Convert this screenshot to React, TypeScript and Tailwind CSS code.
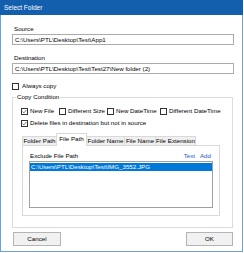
import React from 'react';

const Check = ({ checked }: { checked?: boolean }) => (
    <span className="w-[7px] h-[7px] border border-[#333] bg-white flex items-center justify-center shrink-0">
        {checked && (
            <svg viewBox="0 0 8 8" className="w-[5px] h-[5px]">
                <path d="M1 4.2 L3 6.2 L7 1.6" stroke="#333" strokeWidth="1.1" fill="none" />
            </svg>
        )}
    </span>
);

const tabs = [
    { name: 'Folder Path', w: 'w-[35px]' },
    { name: 'File Path', w: 'w-[31px]', active: true },
    { name: 'Folder Name', w: 'w-[39px]' },
    { name: 'File Name', w: 'w-[32px]' },
    { name: 'File Extension', w: 'w-[41px]' },
];

const App = () => {
    return (
        <div className="w-[244px] h-[253px] bg-white font-['Liberation_Sans',Arial,sans-serif] text-[6.2px] leading-[8px] text-black whitespace-nowrap">
            <div className="w-[243px]">
                {/* Title bar */}
                <div className="h-[15px] bg-[#135fae] text-white flex items-center pl-[4px] text-[6.5px]">
                    Select Folder
                </div>

                <div className="h-[237px] border-x border-b border-[#6fa3d8] flex flex-col pl-[11px]">
                    <div className="mt-[10px] pl-[2px]">Source</div>
                    <div className="mt-[1px] h-[11px] w-[222px] border border-[#ababab] flex items-center pl-[2px]">
                        C:\Users\PTL\Desktop\Test\App1
                    </div>

                    <div className="mt-[9px] pl-[2px]">Destination</div>
                    <div className="mt-[1px] h-[11px] w-[222px] border border-[#ababab] flex items-center pl-[2px]">
                        C:\Users\PTL\Desktop\Test\Test27\New folder (2)
                    </div>

                    <div className="mt-[8px] h-[8px] flex items-center gap-[3px]">
                        <Check />
                        <span>Always copy</span>
                    </div>

                    {/* Copy Condition group */}
                    <div className="relative mt-[7px] w-[221px] h-[131px] border border-[#dcdcdc] pl-[8px]">
                        <span className="absolute -top-[5px] left-[3px] bg-white px-[1px]">Copy Condition</span>

                        <div className="mt-[9px] h-[8px] flex items-center">
                            <div className="w-[38px] flex items-center gap-[2px]">
                                <Check checked />
                                <span>New File</span>
                            </div>
                            <div className="w-[48px] flex items-center gap-[2px]">
                                <Check />
                                <span>Different Size</span>
                            </div>
                            <div className="w-[53px] flex items-center gap-[2px]">
                                <Check />
                                <span>New DateTime</span>
                            </div>
                            <div className="flex items-center gap-[2px]">
                                <Check />
                                <span>Different DateTime</span>
                            </div>
                        </div>

                        <div className="mt-[4px] h-[8px] flex items-center gap-[2px]">
                            <Check checked />
                            <span>Delete files in destination but not in source</span>
                        </div>

                        {/* Tabs */}
                        <div className="mt-[6px] ml-[1px] h-[12px] flex items-end">
                            {tabs.map((t, i) =>
                                t.active ? (
                                    <div
                                        key={t.name}
                                        className={`${t.w} ${i > 0 ? '-ml-px' : ''} relative z-10 -mb-px h-[13px] bg-white border-x border-t border-[#d9d9d9] flex items-center justify-center pb-[2px]`}
                                    >
                                        {t.name}
                                    </div>
                                ) : (
                                    <div
                                        key={t.name}
                                        className={`${t.w} ${i > 0 ? '-ml-px' : ''} h-[9px] bg-[#f0f0f0] border-x border-t border-[#d9d9d9] flex items-center justify-center`}
                                    >
                                        {t.name}
                                    </div>
                                )
                            )}
                        </div>

                        <div className="ml-[1px] w-[198px] h-[71px] border border-[#d9d9d9] bg-white pl-[6px]">
                            <div className="mt-[6px] w-[184px] h-[8px] flex items-center justify-between">
                                <span className="pl-[1px]">Exclude File Path</span>
                                <div className="flex gap-[5px] pr-[2px] text-[#1a57c6]">
                                    <span>Text</span>
                                    <span>Add</span>
                                </div>
                            </div>
                            <div className="mt-[1px] w-[184px] h-[47px] border border-[#a0a0a0]">
                                <div className="mt-px h-[8px] bg-[#0078d7] text-white flex items-center pl-[1px]">
                                    C:\Users\PTL\Desktop\Test\IMG_3552.JPG
                                </div>
                            </div>
                        </div>
                    </div>

                    {/* Buttons */}
                    <div className="mt-[4px] w-[220px] ml-[1px] flex justify-between">
                        <button className="w-[48px] h-[14px] bg-[#f1f1f1] border border-[#b4b4b4] flex items-center justify-center">
                            Cancel
                        </button>
                        <button className="w-[47px] h-[14px] bg-[#f1f1f1] border border-[#b4b4b4] flex items-center justify-center">
                            OK
                        </button>
                    </div>
                </div>
            </div>
        </div>
    );
};

export default App;
